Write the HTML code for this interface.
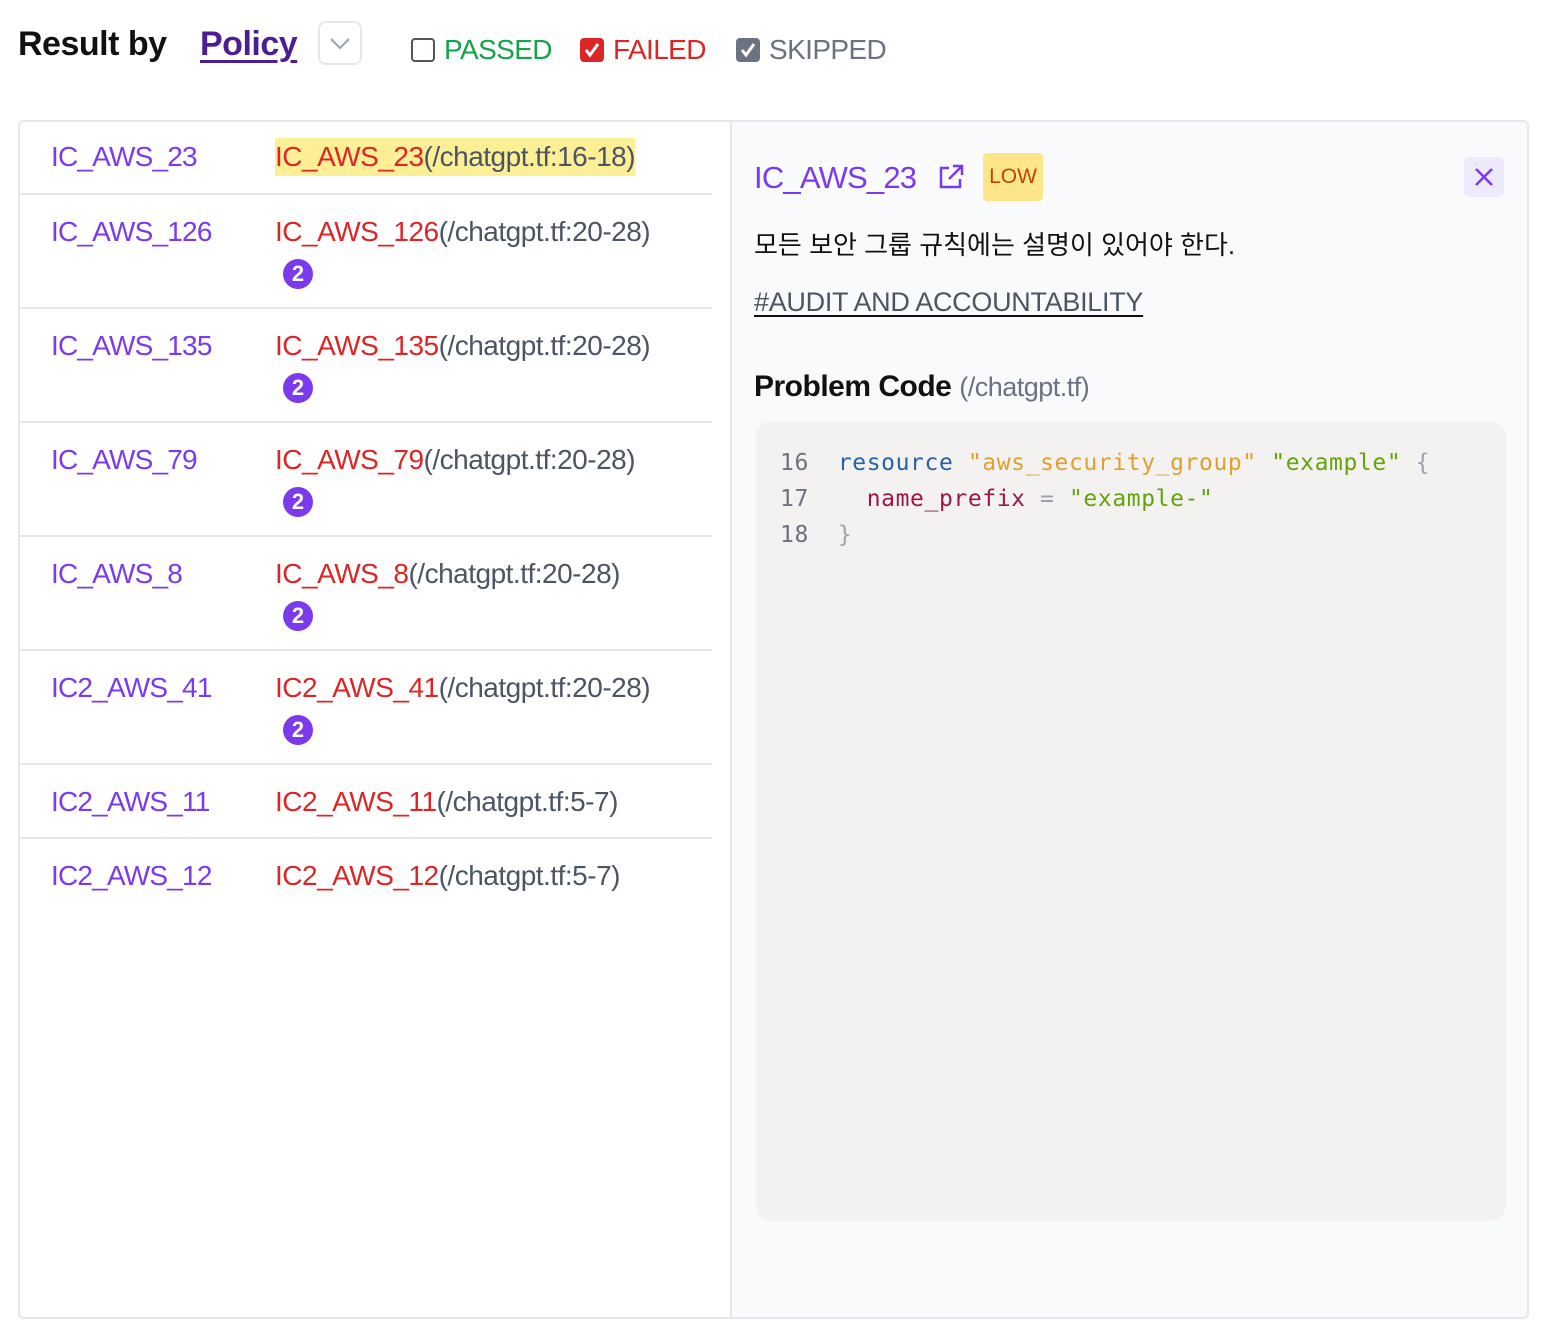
<!DOCTYPE html>
<html><head><meta charset="utf-8"><style>
*{box-sizing:border-box;margin:0;padding:0}
body{width:1550px;height:1336px;background:#fff;font-family:"Liberation Sans","Noto Sans CJK KR",sans-serif;position:relative;overflow:hidden}
.a{position:absolute;white-space:nowrap}
.hdr{top:22px;font-size:35px;line-height:44px;letter-spacing:-0.5px}
.cb{position:absolute;top:38px;width:24px;height:24px;border-radius:4px}
.lbl{font-size:28px;top:33px;line-height:34px;letter-spacing:-0.6px}
.panel{position:absolute;left:18px;top:120px;width:1511px;height:1199px;border:2px solid #e5e7eb;border-radius:6px;overflow:hidden}
.left{position:absolute;left:0;top:0;width:710px;height:100%;background:#fff}
.right{position:absolute;left:710px;top:0;right:0;height:100%;background:#f9fafb;border-left:2px solid #e5e7eb}
.row{position:absolute;left:0;width:692px;border-bottom:2px solid #e5e7eb}
.id{position:absolute;left:31px;top:20px;font-size:28px;color:#7c3aed;line-height:34px;letter-spacing:-0.8px}
.loc{position:absolute;left:255px;top:18px;font-size:28px;line-height:38px;color:#dc2626;letter-spacing:-0.5px}
.loc span{color:#4b5563}
.bd{position:absolute;left:263px;top:64px;width:30px;height:30px;border-radius:50%;background:#7c3aed;color:#fff;font-size:22px;text-align:center;line-height:30px;font-weight:bold}
.code{font-family:"DejaVu Sans Mono","Liberation Mono",monospace;font-size:23px;line-height:36px;letter-spacing:0.6px}
</style></head><body>
<div class="a hdr" style="left:18px;color:#111;font-weight:bold;font-size:34px">Result by</div>
<div class="a hdr" style="left:200px;color:#4c1d95;text-decoration:underline;text-decoration-thickness:3px;text-underline-offset:5px;font-weight:bold;font-size:34px">Policy</div>
<div class="a" style="left:318px;top:21px;width:44px;height:44px;border:2px solid #e5e7eb;border-radius:8px">
<svg width="40" height="40" viewBox="0 0 40 40" style="position:absolute;left:0;top:0"><path d="M11 16l9 9 9-9" fill="none" stroke="#9ca3af" stroke-width="2"/></svg></div>
<div class="cb" style="left:411px;border:2px solid #555;background:#fff"></div>
<div class="a lbl" style="left:444px;color:#16a34a">PASSED</div>
<div class="cb" style="left:580px;background:#dc2626"><svg width="24" height="24"><path d="M6 12l4 5 8-11" fill="none" stroke="#fff" stroke-width="3"/></svg></div>
<div class="a lbl" style="left:613px;color:#dc2626">FAILED</div>
<div class="cb" style="left:736px;background:#6b7280"><svg width="24" height="24"><path d="M6 12l4 5 8-11" fill="none" stroke="#fff" stroke-width="3"/></svg></div>
<div class="a lbl" style="left:769px;color:#6b7280">SKIPPED</div>

<div class="panel">
<div class="left">
<div class="row" style="top:0;height:73px"><div class="id" style="top:18px">IC_AWS_23</div><div class="loc" style="background:#fdef96;top:16px">IC_AWS_23<span>(/chatgpt.tf:16-18)</span></div></div>
<div class="row" style="top:73px;height:114px"><div class="id">IC_AWS_126</div><div class="loc">IC_AWS_126<span>(/chatgpt.tf:20-28)</span></div><div class="bd">2</div></div>
<div class="row" style="top:187px;height:114px"><div class="id">IC_AWS_135</div><div class="loc">IC_AWS_135<span>(/chatgpt.tf:20-28)</span></div><div class="bd">2</div></div>
<div class="row" style="top:301px;height:114px"><div class="id">IC_AWS_79</div><div class="loc">IC_AWS_79<span>(/chatgpt.tf:20-28)</span></div><div class="bd">2</div></div>
<div class="row" style="top:415px;height:114px"><div class="id">IC_AWS_8</div><div class="loc">IC_AWS_8<span>(/chatgpt.tf:20-28)</span></div><div class="bd">2</div></div>
<div class="row" style="top:529px;height:114px"><div class="id">IC2_AWS_41</div><div class="loc">IC2_AWS_41<span>(/chatgpt.tf:20-28)</span></div><div class="bd">2</div></div>
<div class="row" style="top:643px;height:74px"><div class="id">IC2_AWS_11</div><div class="loc">IC2_AWS_11<span>(/chatgpt.tf:5-7)</span></div></div>
<div class="row" style="top:717px;height:74px;border-bottom:none"><div class="id">IC2_AWS_12</div><div class="loc">IC2_AWS_12<span>(/chatgpt.tf:5-7)</span></div></div>
</div>
<div class="right">
<div class="a" style="left:22px;top:37px;font-size:31px;color:#7c3aed;line-height:38px;letter-spacing:-0.8px">IC_AWS_23</div>
<svg class="a" style="left:204px;top:40px" width="30" height="30" viewBox="0 0 30 30"><path d="M13 6H5v19h19v-8M17 4h9v9M26 4L13 17" fill="none" stroke="#7c3aed" stroke-width="2.5"/></svg>
<div class="a" style="left:251px;top:31px;width:60px;height:48px;background:#fde68a;border-radius:4px;color:#c2410c;font-size:21px;text-align:center;line-height:48px">LOW</div>
<div class="a" style="left:732px;top:35px;width:40px;height:40px;background:#ede9fe;border-radius:6px"><svg width="40" height="40"><path d="M12 12l16 16M28 12L12 28" stroke="#7c3aed" stroke-width="2.5"/></svg></div>
<div class="a" style="left:22px;top:106px;font-size:26px;color:#111;line-height:34px">모든 보안 그룹 규칙에는 설명이 있어야 한다.</div>
<div class="a" style="left:22px;top:163px;font-size:27px;color:#4b5563;line-height:34px;letter-spacing:-0.3px;text-decoration:underline;text-decoration-color:#111;text-underline-offset:4px">#AUDIT AND ACCOUNTABILITY</div>
<div class="a" style="left:22px;top:246px;font-size:30px;color:#111;line-height:38px;font-weight:bold;letter-spacing:-0.5px">Problem Code <span style="font-size:27px;color:#6b7280;font-weight:normal">(/chatgpt.tf)</span></div>
<div class="a" style="left:24px;top:299px;width:750px;height:800px;background:#f3f2f0;border-radius:16px">
<div class="code" style="position:absolute;left:24px;top:24px;white-space:pre"><span style="color:#6b7280">16</span>  <span style="color:#2563a8">resource</span> <span style="color:#e0a030">"aws_security_group"</span> <span style="color:#65a30d">"example"</span> <span style="color:#9ca3af">{</span>
<span style="color:#6b7280">17</span>    <span style="color:#9d174d">name_prefix</span> <span style="color:#9ca3af">=</span> <span style="color:#65a30d">"example-"</span>
<span style="color:#6b7280">18</span>  <span style="color:#9ca3af">}</span></div>
</div>
</div>
</div>
</body></html>
